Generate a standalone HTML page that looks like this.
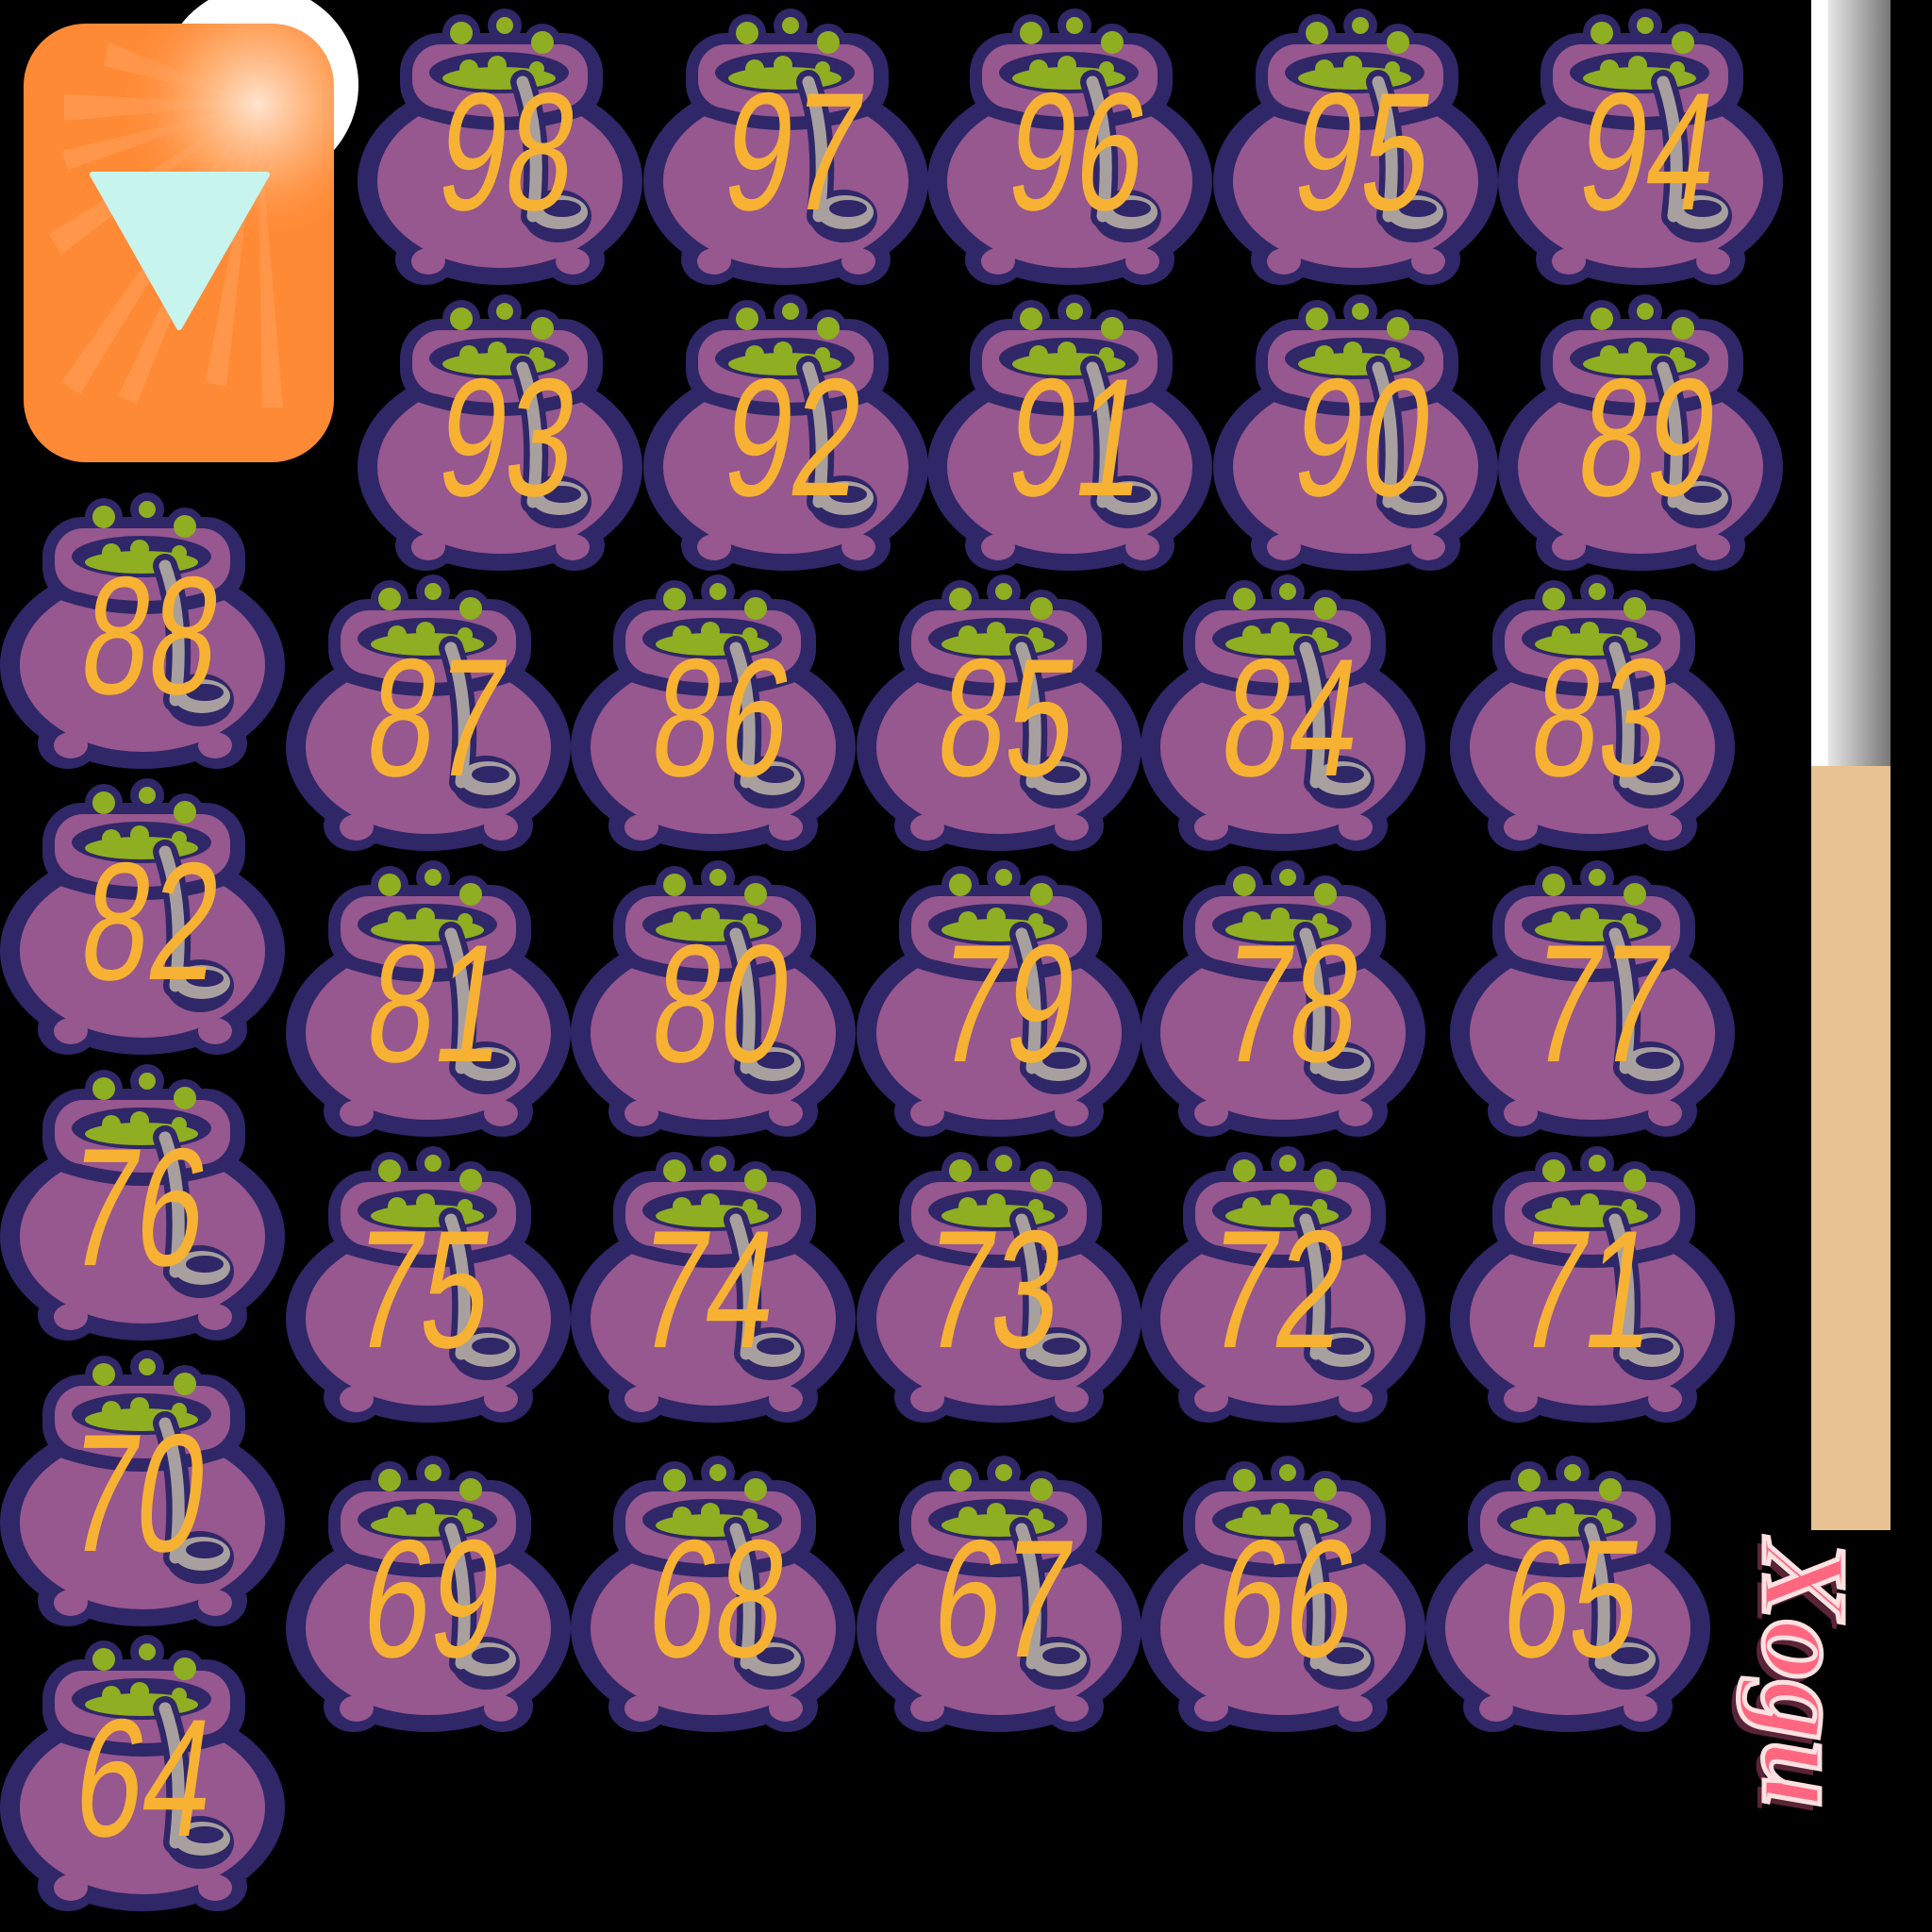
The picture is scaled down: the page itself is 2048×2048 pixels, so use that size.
<!DOCTYPE html>
<html><head><meta charset="utf-8"><style>
html,body{margin:0;padding:0;background:#000;width:2048px;height:2048px;overflow:hidden}
svg{display:block}
.n text{font-family:"Liberation Sans",sans-serif;font-size:178px;fill:#f7b233;text-anchor:middle}
</style></head><body>
<svg width="2048" height="2048" viewBox="0 0 2048 2048" xmlns="http://www.w3.org/2000/svg">
<defs>
<radialGradient id="glare" cx="273" cy="110" r="150" gradientUnits="userSpaceOnUse">
<stop offset="0" stop-color="#ffe4cf"/><stop offset="0.5" stop-color="#ffae70" stop-opacity="0.8"/><stop offset="1" stop-color="#ff8a35" stop-opacity="0"/>
</radialGradient>
<linearGradient id="bar" x1="0" x2="1" y1="0" y2="0">
<stop offset="0" stop-color="#fff"/><stop offset="0.2" stop-color="#fff"/><stop offset="0.22" stop-color="#e6e6e6"/><stop offset="1" stop-color="#777"/>
</linearGradient>
<g id="c">
<g fill="#2f2768">
<ellipse cx="151" cy="185" rx="151" ry="110"/>
<rect x="45" y="28" width="215" height="95" rx="42"/>
<circle cx="110" cy="28" r="20"/><circle cx="156" cy="20" r="18"/><circle cx="196" cy="38" r="20"/>
<ellipse cx="72" cy="268" rx="32" ry="27"/><ellipse cx="230" cy="268" rx="32" ry="27"/>
</g>
<g fill="#97578f">
<ellipse cx="75" cy="270" rx="18" ry="14"/><ellipse cx="228" cy="270" rx="18" ry="14"/>
<ellipse cx="151" cy="185" rx="130" ry="92"/>
</g>
<path d="M62 108 Q151 140 240 108" stroke="#2f2768" stroke-width="14" fill="none"/>
<rect x="58" y="40" width="186" height="68" rx="30" fill="#97578f"/>
<ellipse cx="150" cy="70" rx="74" ry="22" fill="#2f2768"/>
<ellipse cx="150" cy="76" rx="60" ry="12" fill="#8fae22"/>
<g fill="#8fae22"><circle cx="118" cy="66" r="10"/><circle cx="148" cy="62" r="10"/><circle cx="190" cy="66" r="8"/>
<circle cx="110" cy="28" r="12"/><circle cx="156" cy="20" r="9"/><circle cx="196" cy="38" r="12"/></g>
<path d="M175 80 Q196 140 186 222" stroke="#2f2768" stroke-width="26" fill="none" stroke-linecap="round"/>
<ellipse cx="212" cy="222" rx="36" ry="28" fill="#2f2768"/>
<ellipse cx="214" cy="218" rx="30" ry="18" fill="#a8a09e"/>
<ellipse cx="217" cy="214" rx="20" ry="9" fill="#2f2768"/>
<path d="M175 80 Q196 140 186 222" stroke="#a8a09e" stroke-width="13" fill="none" stroke-linecap="round"/>
</g>
</defs>

<circle cx="275" cy="90" r="105" fill="#fff"/>
<rect x="25" y="25" width="329" height="465" rx="66" fill="#ff8a35"/>
<g fill="#fff" opacity="0.1">
<polygon points="273,110 115,45 110,70"/><polygon points="273,110 68,100 68,128"/><polygon points="273,110 65,160 72,180"/>
<polygon points="273,110 52,248 65,270"/><polygon points="273,110 65,405 85,418"/><polygon points="273,110 125,420 145,428"/>
<polygon points="273,110 218,405 240,410"/><polygon points="273,110 278,432 300,432"/>
</g>
<rect x="25" y="25" width="329" height="465" rx="66" fill="url(#glare)"/>
<polygon points="98,185 283,185 190,347" fill="#c8f4ee" stroke="#c8f4ee" stroke-width="6" stroke-linejoin="round"/>

<rect x="1920" y="0" width="84" height="812" fill="url(#bar)"/>
<rect x="1920" y="812" width="84" height="810" fill="#e8c293"/>

<g>
<use href="#c" x="379" y="7"/><use href="#c" x="682" y="7"/><use href="#c" x="983" y="7"/><use href="#c" x="1286" y="7"/><use href="#c" x="1588" y="7"/>
<use href="#c" x="379" y="310"/><use href="#c" x="682" y="310"/><use href="#c" x="983" y="310"/><use href="#c" x="1286" y="310"/><use href="#c" x="1588" y="310"/>
<use href="#c" x="0" y="520"/><use href="#c" x="0" y="823"/><use href="#c" x="0" y="1126"/><use href="#c" x="0" y="1429"/><use href="#c" x="0" y="1731"/>
<use href="#c" x="303" y="607"/><use href="#c" x="605" y="607"/><use href="#c" x="908" y="607"/><use href="#c" x="1209" y="607"/><use href="#c" x="1537" y="607"/>
<use href="#c" x="303" y="910"/><use href="#c" x="605" y="910"/><use href="#c" x="908" y="910"/><use href="#c" x="1209" y="910"/><use href="#c" x="1537" y="910"/>
<use href="#c" x="303" y="1213"/><use href="#c" x="605" y="1213"/><use href="#c" x="908" y="1213"/><use href="#c" x="1209" y="1213"/><use href="#c" x="1537" y="1213"/>
<use href="#c" x="303" y="1541"/><use href="#c" x="605" y="1541"/><use href="#c" x="908" y="1541"/><use href="#c" x="1209" y="1541"/><use href="#c" x="1511" y="1541"/>
</g>
<g class="n">
<text transform="translate(530,222) skewX(-8) scale(0.72,1)">98</text><text transform="translate(833,222) skewX(-8) scale(0.72,1)">97</text><text transform="translate(1134,222) skewX(-8) scale(0.72,1)">96</text><text transform="translate(1437,222) skewX(-8) scale(0.72,1)">95</text><text transform="translate(1739,222) skewX(-8) scale(0.72,1)">94</text>
<text transform="translate(530,525) skewX(-8) scale(0.72,1)">93</text><text transform="translate(833,525) skewX(-8) scale(0.72,1)">92</text><text transform="translate(1134,525) skewX(-8) scale(0.72,1)">91</text><text transform="translate(1437,525) skewX(-8) scale(0.72,1)">90</text><text transform="translate(1739,525) skewX(-8) scale(0.72,1)">89</text>
<text transform="translate(152,735) skewX(-8) scale(0.72,1)">88</text><text transform="translate(152,1038) skewX(-8) scale(0.72,1)">82</text><text transform="translate(138,1341) skewX(-8) scale(0.72,1)">76</text><text transform="translate(138,1644) skewX(-8) scale(0.72,1)">70</text><text transform="translate(145,1946) skewX(-8) scale(0.72,1)">64</text>
<text transform="translate(455,822) skewX(-8) scale(0.72,1)">87</text><text transform="translate(757,822) skewX(-8) scale(0.72,1)">86</text><text transform="translate(1060,822) skewX(-8) scale(0.72,1)">85</text><text transform="translate(1361,822) skewX(-8) scale(0.72,1)">84</text><text transform="translate(1689,822) skewX(-8) scale(0.72,1)">83</text>
<text transform="translate(455,1125) skewX(-8) scale(0.72,1)">81</text><text transform="translate(757,1125) skewX(-8) scale(0.72,1)">80</text><text transform="translate(1060,1125) skewX(-8) scale(0.72,1)">79</text><text transform="translate(1361,1125) skewX(-8) scale(0.72,1)">78</text><text transform="translate(1689,1125) skewX(-8) scale(0.72,1)">77</text>
<text transform="translate(440,1428) skewX(-8) scale(0.72,1)">75</text><text transform="translate(742,1428) skewX(-8) scale(0.72,1)">74</text><text transform="translate(1045,1428) skewX(-8) scale(0.72,1)">73</text><text transform="translate(1346,1428) skewX(-8) scale(0.72,1)">72</text><text transform="translate(1674,1428) skewX(-8) scale(0.72,1)">71</text>
<text transform="translate(450,1756) skewX(-8) scale(0.72,1)">69</text><text transform="translate(752,1756) skewX(-8) scale(0.72,1)">68</text><text transform="translate(1055,1756) skewX(-8) scale(0.72,1)">67</text><text transform="translate(1356,1756) skewX(-8) scale(0.72,1)">66</text><text transform="translate(1658,1756) skewX(-8) scale(0.72,1)">65</text>
</g>

<g transform="translate(1870,1632) rotate(90)">
<text x="0" y="0" font-family="'Liberation Serif',serif" font-style="italic" font-weight="bold" font-size="128" fill="#5a2438" transform="translate(7,7)">Xogu</text>
<text x="0" y="0" font-family="'Liberation Serif',serif" font-style="italic" font-weight="bold" font-size="128" fill="#ff6680" stroke="#fde0e0" stroke-width="5">Xogu</text>
</g>
</svg>
</body></html>
